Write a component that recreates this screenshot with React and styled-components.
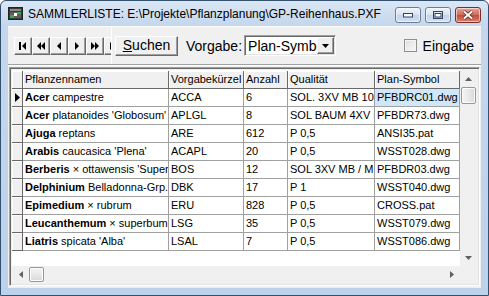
import styled, { createGlobalStyle } from "styled-components";

const GlobalStyle = createGlobalStyle`
  html, body { margin: 0; padding: 0; background: #fff; }
  body { width: 489px; height: 296px; overflow: hidden; }
`;

const Window = styled.div`
  width: 489px;
  height: 296px;
  box-sizing: border-box;
  display: flex;
  flex-direction: column;
  border: 1px solid #34506f;
  border-radius: 6px 6px 0 0;
  background: linear-gradient(#dbe7f4, #c4d7ed 24px, #bcd2ea);
  padding: 0 7px 7px;
  font-family: "Liberation Sans", Arial, sans-serif;
  color: #000;
`;

const TitleBar = styled.div`
  height: 25px;
  flex-shrink: 0;
  display: flex;
  align-items: center;
`;

const TitleText = styled.div`
  margin-left: 5px;
  font-size: 12px;
  white-space: nowrap;
  flex: 1;
`;

const CaptionButtons = styled.div`
  display: flex;
  gap: 4px;
  align-self: flex-start;
  margin-top: 6px;
`;

const CapButton = styled.div`
  width: 26px;
  height: 16px;
  box-sizing: border-box;
  border: 1px solid ${(p) => (p.$close ? "#7a2e24" : "#6a7d98")};
  border-radius: 3px;
  background: ${(p) =>
    p.$close
      ? "linear-gradient(#e7a597, #d06a58 50%, #c4493a 51%, #d8806c)"
      : "linear-gradient(#eef3fa, #d7e3f1 50%, #c3d4ea 51%, #d3e1f2)"};
  box-shadow: inset 0 0 0 1px rgba(255, 255, 255, 0.55);
  display: flex;
  align-items: center;
  justify-content: center;
`;

const Client = styled.div`
  flex: 1;
  display: flex;
  flex-direction: column;
  background: #f0f0f0;
  min-height: 0;
`;

const Toolbar = styled.div`
  height: 37px;
  flex-shrink: 0;
  display: flex;
  align-items: center;
  border-top: 1px solid #fbfbfb;
  border-bottom: 1px solid #a0a0a0;
  box-shadow: 0 1px 0 #fff;
  font-size: 14px;
`;

const NavPanel = styled.div`
  width: 104px;
  height: 100%;
  box-sizing: border-box;
  padding-left: 6px;
  display: flex;
  align-items: center;
  overflow: hidden;
  border-right: 1px solid #fff;
  flex-shrink: 0;
`;

const Raised = styled.div`
  box-sizing: border-box;
  background: #f0f0f0;
  border-top: 1px solid #fff;
  border-left: 1px solid #fff;
  border-right: 1px solid #696969;
  border-bottom: 1px solid #696969;
  box-shadow: inset -1px -1px 0 #a0a0a0;
  display: flex;
  align-items: center;
  justify-content: center;
  flex-shrink: 0;
`;

const NavButton = styled(Raised)`
  width: 18px;
  height: 18px;
`;

const PushButton = styled(Raised)`
  width: 63px;
  height: 20px;
  margin-left: 3px;
  padding-bottom: 1px;
`;

const Label = styled.span`
  margin-left: ${(p) => p.$gap || 0}px;
  margin-right: ${(p) => p.$end || 0}px;
  white-space: nowrap;
`;

const Mnemonic = styled.span`
  text-decoration: underline;
`;

const Combo = styled.div`
  width: 92px;
  height: 21px;
  margin-left: 2px;
  box-sizing: border-box;
  border-top: 1px solid #a0a0a0;
  border-left: 1px solid #a0a0a0;
  border-right: 1px solid #fff;
  border-bottom: 1px solid #fff;
  box-shadow: inset 1px 1px 0 #696969, inset -1px -1px 0 #e3e3e3;
  background: #fff;
  display: flex;
  align-items: center;
  padding: 1px 1px 1px 3px;
`;

const ComboText = styled.div`
  flex: 1;
  overflow: hidden;
  white-space: nowrap;
`;

const DropButton = styled(Raised)`
  width: 17px;
  height: 17px;
`;

const CheckBox = styled.div`
  margin-left: auto;
  width: 13px;
  height: 13px;
  box-sizing: border-box;
  border: 1px solid #8e8f8f;
  background: linear-gradient(135deg, #dcdcdc, #fbfbfb);
  box-shadow: inset 0 0 0 1px #f4f4f4;
`;

const GridBox = styled.div`
  flex: 1;
  min-height: 0;
  margin: 2px 1px 2px 1px;
  box-sizing: border-box;
  border-top: 1px solid #a0a0a0;
  border-left: 1px solid #a0a0a0;
  border-right: 1px solid #fff;
  border-bottom: 1px solid #fff;
  box-shadow: inset 1px 1px 0 #696969, inset -1px -1px 0 #e3e3e3;
  padding: 2px;
  display: grid;
  grid-template-columns: 1fr 17px;
  grid-template-rows: 1fr 17px;
  background: #f0f0f0;
`;

const Table = styled.div`
  background: #fff;
  overflow: hidden;
  display: flex;
  flex-direction: column;
  padding-top: 1px;
`;

const Row = styled.div`
  display: grid;
  grid-template-columns: 11px 146px 75px 44px 87px 1fr;
  font-size: 11px;
`;

const Cell = styled.div`
  height: 18px;
  box-sizing: border-box;
  line-height: 17px;
  padding: 0 2px;
  overflow: hidden;
  white-space: pre;
  border-right: 1px solid ${(p) => (p.$fixed ? "#696969" : "#a0a0a0")};
  border-bottom: 1px solid ${(p) => (p.$fixed ? "#696969" : "#a0a0a0")};
  background: ${(p) => (p.$fixed ? "#f0f0f0" : p.$selected ? "#cfe7fa" : "#fff")};
  box-shadow: ${(p) => (p.$fixed ? "inset 1px 1px 0 #fff" : "none")};
`;

const Indicator = styled(Cell)`
  display: flex;
  align-items: center;
  padding: 0 0 0 3px;
`;

const Genus = styled.b`
  font-weight: bold;
`;

const ScrollBar = styled.div`
  display: flex;
  flex-direction: ${(p) => (p.$horizontal ? "row" : "column")};
  background: #f0f0f0;
  align-items: stretch;
`;

const ArrowBox = styled.div`
  width: 17px;
  height: 17px;
  flex-shrink: 0;
  display: flex;
  align-items: center;
  justify-content: center;
`;

const Thumb = styled.div`
  box-sizing: border-box;
  flex-shrink: 0;
  border: 1px solid #979797;
  border-radius: 2px;
  ${(p) =>
    p.$horizontal
      ? "width: 15px; margin: 1px 0; background: linear-gradient(#f4f4f4, #e8e8e8 50%, #d8d8d8);"
      : "height: 17px; margin: 0 1px; background: linear-gradient(to right, #f4f4f4, #e8e8e8 50%, #d8d8d8);"}
  box-shadow: inset 0 0 0 1px #fcfcfc;
`;

const Spacer = styled.div`
  flex: 1;
`;

const Corner = styled.div`
  background: #f0f0f0;
`;

const rows = [
  ["Acer", " campestre", "ACCA", "6", "SOL. 3XV MB 100-125", "PFBDRC01.dwg"],
  ["Acer", " platanoides 'Globosum'", "APLGL", "8", "SOL BAUM 4XV MB 16-18", "PFBDR73.dwg"],
  ["Ajuga", " reptans", "ARE", "612", "P 0,5", "ANSI35.pat"],
  ["Arabis", " caucasica 'Plena'", "ACAPL", "20", "P 0,5", "WSST028.dwg"],
  ["Berberis", " × ottawensis 'Superba'", "BOS", "12", "SOL 3XV MB / M 60-80", "PFBDR03.dwg"],
  ["Delphinium", " Belladonna-Grp.", "DBK", "17", "P 1", "WSST040.dwg"],
  ["Epimedium", " × rubrum", "ERU", "828", "P 0,5", "CROSS.pat"],
  ["Leucanthemum", " × superbum", "LSG", "35", "P 0,5", "WSST079.dwg"],
  ["Liatris", " spicata 'Alba'", "LSAL", "7", "P 0,5", "WSST086.dwg"],
];

const headers = ["Pflanzennamen", "Vorgabekürzel", "Anzahl", "Qualität", "Plan-Symbol"];

const navShapes = {
  first: (
    <>
      <rect x="1" y="0" width="2" height="8" />
      <polygon points="8,0 8,8 4,4" />
    </>
  ),
  priorPage: (
    <>
      <polygon points="5,0 5,8 1,4" />
      <polygon points="9,0 9,8 5,4" />
    </>
  ),
  prior: <polygon points="7,0 7,8 3,4" />,
  next: <polygon points="3,0 3,8 7,4" />,
  nextPage: (
    <>
      <polygon points="1,0 1,8 5,4" />
      <polygon points="5,0 5,8 9,4" />
    </>
  ),
  last: (
    <>
      <polygon points="2,0 2,8 6,4" />
      <rect x="7" y="0" width="2" height="8" />
    </>
  ),
};

const NavGlyph = ({ kind }) => (
  <svg width="10" height="8" viewBox="0 0 10 8" fill="#000">
    {navShapes[kind]}
  </svg>
);

const Arrow = ({ dir, color = "#606060" }) => {
  const pts = {
    up: "0,4 7,4 3.5,0",
    down: "0,0 7,0 3.5,4",
    left: "4,0 4,7 0,3.5",
    right: "0,0 0,7 4,3.5",
  }[dir];
  const vertical = dir === "up" || dir === "down";
  return (
    <svg width={vertical ? 7 : 4} height={vertical ? 4 : 7} viewBox={vertical ? "0 0 7 4" : "0 0 4 7"}>
      <polygon points={pts} fill={color} />
    </svg>
  );
};

const RowPointer = () => (
  <svg width="5" height="9" viewBox="0 0 5 9">
    <polygon points="0,0 0,9 5,4.5" fill="#000" />
  </svg>
);

const AppIcon = () => (
  <svg width="15" height="13" viewBox="0 0 15 13">
    <rect x="0.5" y="0.5" width="14" height="12" fill="#3a3a3a" stroke="#222" />
    <rect x="2" y="2" width="11" height="2" fill="#8a8a8a" />
    <rect x="2" y="5" width="11" height="6" fill="#5d5d5d" />
    <rect x="6" y="6" width="3" height="3" fill="#fff" />
    <rect x="2" y="8" width="4" height="3" fill="#27b04a" />
    <rect x="9" y="5" width="4" height="2" fill="#27b04a" />
  </svg>
);

const App = () => (
  <>
    <GlobalStyle />
    <Window>
      <TitleBar>
        <AppIcon />
        <TitleText>SAMMLERLISTE: E:\Projekte\Pflanzplanung\GP-Reihenhaus.PXF</TitleText>
        <CaptionButtons>
          <CapButton>
            <svg width="10" height="5" viewBox="0 0 10 5">
              <rect x="0.5" y="0.5" width="9" height="3.5" fill="#fff" stroke="#33465f" />
            </svg>
          </CapButton>
          <CapButton>
            <svg width="10" height="8" viewBox="0 0 10 8">
              <rect x="0.5" y="0.5" width="9" height="7" fill="none" stroke="#33465f" />
              <rect x="2" y="2.5" width="6" height="3.5" fill="#fff" stroke="#33465f" />
            </svg>
          </CapButton>
          <CapButton $close>
            <svg width="12" height="10" viewBox="0 0 12 10">
              <path d="M2 1.5 L10 8.5 M10 1.5 L2 8.5" stroke="#5a2018" strokeWidth="3.4" />
              <path d="M2 1.5 L10 8.5 M10 1.5 L2 8.5" stroke="#fff" strokeWidth="2" />
            </svg>
          </CapButton>
        </CaptionButtons>
      </TitleBar>
      <Client>
        <Toolbar>
          <NavPanel>
            {["first", "priorPage", "prior", "next", "nextPage", "last"].map((k) => (
              <NavButton key={k}>
                <NavGlyph kind={k} />
              </NavButton>
            ))}
          </NavPanel>
          <PushButton>
            <span>
              <Mnemonic>S</Mnemonic>uchen
            </span>
          </PushButton>
          <Label $gap={8}>Vorgabe:</Label>
          <Combo>
            <ComboText>Plan-Symbol</ComboText>
            <DropButton>
              <Arrow dir="down" color="#000" />
            </DropButton>
          </Combo>
          <CheckBox />
          <Label $gap={6} $end={7}>
            Ein<Mnemonic>g</Mnemonic>abe
          </Label>
        </Toolbar>
        <GridBox>
          <Table>
            <Row>
              <Cell $fixed />
              {headers.map((h) => (
                <Cell key={h} $fixed>
                  {h}
                </Cell>
              ))}
            </Row>
            {rows.map((r, i) => (
              <Row key={i}>
                <Indicator $fixed>{i === 0 && <RowPointer />}</Indicator>
                <Cell>
                  <Genus>{r[0]}</Genus>
                  {r[1]}
                </Cell>
                <Cell>{r[2]}</Cell>
                <Cell>{r[3]}</Cell>
                <Cell>{r[4]}</Cell>
                <Cell $selected={i === 0}>{r[5]}</Cell>
              </Row>
            ))}
          </Table>
          <ScrollBar>
            <ArrowBox>
              <Arrow dir="up" />
            </ArrowBox>
            <Thumb />
            <Spacer />
            <ArrowBox>
              <Arrow dir="down" />
            </ArrowBox>
          </ScrollBar>
          <ScrollBar $horizontal>
            <ArrowBox>
              <Arrow dir="left" />
            </ArrowBox>
            <Thumb $horizontal />
            <Spacer />
            <ArrowBox>
              <Arrow dir="right" />
            </ArrowBox>
          </ScrollBar>
          <Corner />
        </GridBox>
      </Client>
    </Window>
  </>
);

export default App;
